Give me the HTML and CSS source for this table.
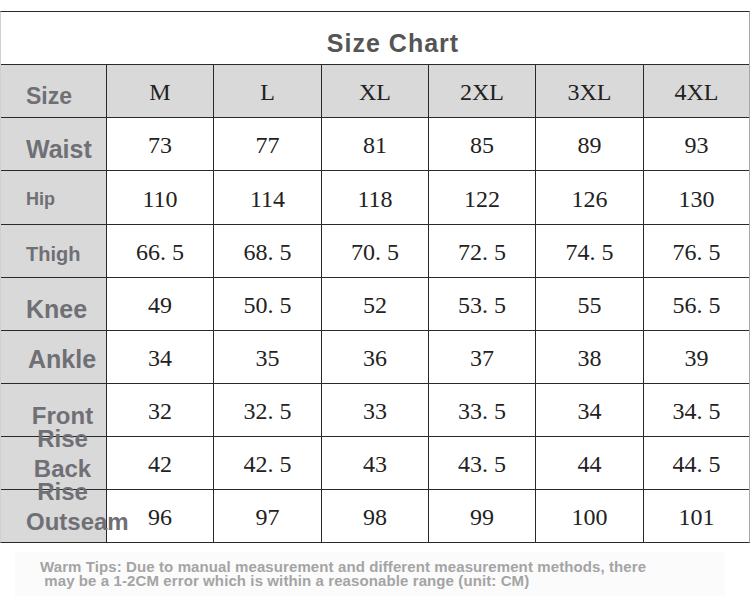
FILE: index.html
```html
<!DOCTYPE html>
<html>
<head>
<meta charset="utf-8">
<link rel="stylesheet" href="styles.css">
</head>
<body>
<div class="chart">
  <div class="title"><span>Size Chart</span></div>

  <div class="lab">Size</div>
  <div class="hd">M</div><div class="hd">L</div><div class="hd">XL</div><div class="hd">2XL</div><div class="hd">3XL</div><div class="hd">4XL</div>

  <div class="lab lab-lg">Waist</div>
  <div class="c">73</div><div class="c">77</div><div class="c">81</div><div class="c">85</div><div class="c">89</div><div class="c">93</div>

  <div class="lab lab-sm">Hip</div>
  <div class="c">110</div><div class="c">114</div><div class="c">118</div><div class="c">122</div><div class="c">126</div><div class="c">130</div>

  <div class="lab lab-sm2">Thigh</div>
  <div class="c">66. 5</div><div class="c">68. 5</div><div class="c">70. 5</div><div class="c">72. 5</div><div class="c">74. 5</div><div class="c">76. 5</div>

  <div class="lab lab-lg">Knee</div>
  <div class="c">49</div><div class="c">50. 5</div><div class="c">52</div><div class="c">53. 5</div><div class="c">55</div><div class="c">56. 5</div>

  <div class="lab lab-lg lab-ankle">Ankle</div>
  <div class="c">34</div><div class="c">35</div><div class="c">36</div><div class="c">37</div><div class="c">38</div><div class="c">39</div>

  <div class="lab lab-two lab-front">Front<br>Rise</div>
  <div class="c">32</div><div class="c">32. 5</div><div class="c">33</div><div class="c">33. 5</div><div class="c">34</div><div class="c">34. 5</div>

  <div class="lab lab-two">Back<br>Rise</div>
  <div class="c">42</div><div class="c">42. 5</div><div class="c">43</div><div class="c">43. 5</div><div class="c">44</div><div class="c">44. 5</div>

  <div class="lab lab-out">Outseam</div>
  <div class="c">96</div><div class="c">97</div><div class="c">98</div><div class="c">99</div><div class="c">100</div><div class="c">101</div>
</div>

<div class="tips">
  <p class="tips-text">Warm Tips: Due to manual measurement and different measurement methods, there<br>&nbsp;may be a 1-2CM error which is within a reasonable range (unit: CM)</p>
</div>
</body>
</html>
```

FILE: styles.css
```css
html, body {
  margin: 0;
  padding: 0;
  background: #ffffff;
}

.chart {
  margin-top: 11px;
  width: 750px;
  box-sizing: border-box;
  display: grid;
  grid-template-columns: 105px 106px 107px 106px 106px 107px 105px;
  grid-template-rows: 52px 52px 52px 53px 52px 52px 52px 52px 52px 52px;
  gap: 1px;
  background: #2a2a2a;
  border-top: 1px solid #2a2a2a;
  border-bottom: 1px solid #2a2a2a;
  border-left: 1px solid #d0d0d0;
  border-right: 1px solid #a8a8a8;
}

.title {
  grid-column: 1 / -1;
  background: #ffffff;
  display: flex;
  align-items: center;
  justify-content: center;
  padding: 11px 0 0 36px;
  box-sizing: border-box;
}

.title span {
  font-family: "Liberation Sans", Arial, sans-serif;
  font-weight: bold;
  font-size: 25px;
  letter-spacing: 1px;
  color: #555555;
}

.hd,
.c {
  display: flex;
  align-items: center;
  justify-content: center;
  font-family: "Liberation Serif", "Times New Roman", serif;
  font-size: 24px;
  color: #222222;
  padding-top: 3px;
  box-sizing: border-box;
}

.hd {
  background: #d9d9d9;
}

.c {
  background: #ffffff;
}

.lab {
  position: relative;
  z-index: 1;
  background: #d9d9d9;
  display: flex;
  align-items: center;
  padding: 10px 0 0 25px;
  box-sizing: border-box;
  font-family: "Liberation Sans", Arial, sans-serif;
  font-weight: bold;
  font-size: 23px;
  line-height: 23px;
  color: #6f6f76;
  white-space: nowrap;
}

.lab-lg {
  font-size: 25px;
}

.lab-out {
  font-size: 24px;
}

.lab-sm {
  font-size: 18px;
  padding-top: 4px;
}

.lab-sm2 {
  font-size: 20px;
  padding-top: 6px;
}

.lab-ankle {
  padding-left: 27px;
  padding-top: 4px;
}

.lab-two {
  z-index: 2;
  font-size: 24px;
  line-height: 23px;
  text-align: center;
  justify-content: center;
  padding: 34px 0 0 18px;
}

.lab-front {
  z-index: 3;
}

.tips {
  margin: 9px 25px 0 15px;
  background: #fbfbfb;
  padding: 8px 0 8px 25px;
}

.tips-text {
  margin: 0;
  font-family: "Liberation Sans", Arial, sans-serif;
  font-weight: bold;
  font-size: 15px;
  letter-spacing: 0.1px;
  line-height: 14px;
  color: #a4a4a4;
  white-space: nowrap;
}
```
